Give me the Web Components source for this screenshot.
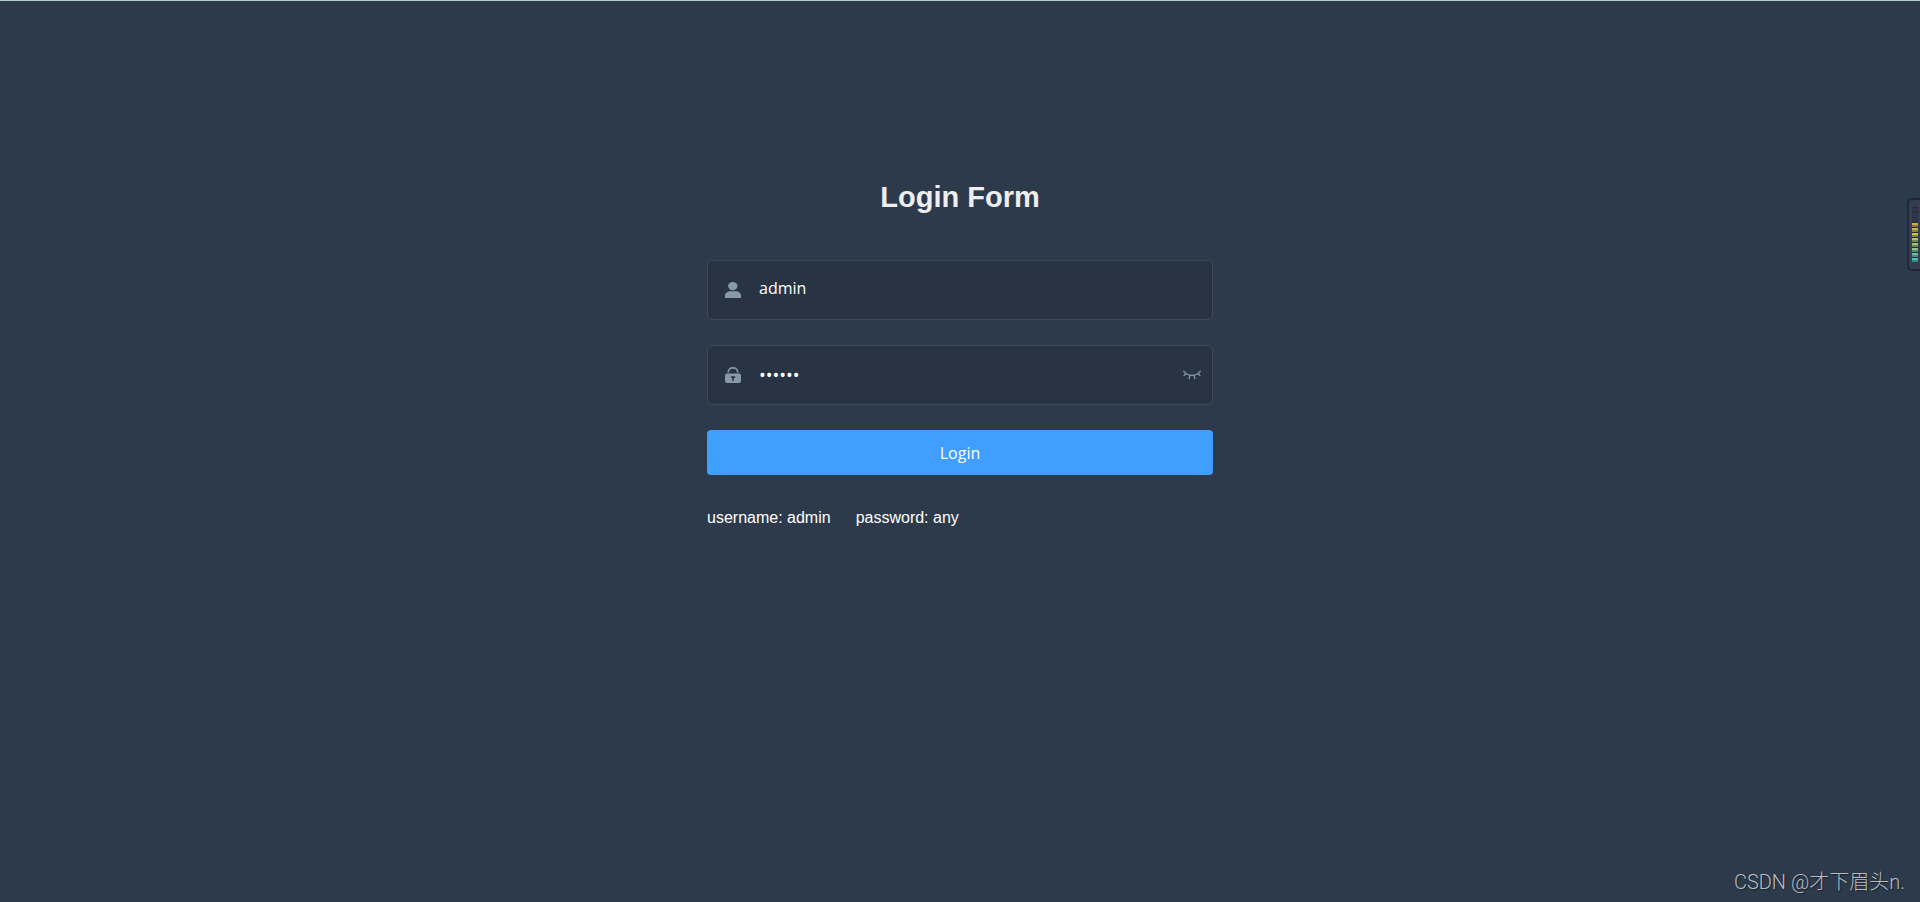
<!DOCTYPE html>
<html lang="en">
<head>
<meta charset="utf-8">
<meta name="viewport" content="width=device-width, initial-scale=1">
<title>Login</title>
<style>
  html, body {
    margin: 0;
    height: 100%;
    background: #2d3a4b;
    font-family: 'Liberation Sans', Arial, sans-serif;
  }
</style>
</head>
<body>
<login-page>
  <login-form></login-form>
  <level-meter slot="side"></level-meter>
  <page-mark slot="mark">CSDN @才下眉头n.</page-mark>
</login-page>

<script>
const pageTemplate = document.createElement('template');
pageTemplate.innerHTML = `
  <style>
  :host {
    display: flex;
    flex-direction: column;
    box-sizing: border-box;
    min-height: 100vh;
    border-top: 1px solid #b4d0d0;
    background: #2d3a4b;
  }
  main {
    display: flex;
    flex: 1;
    justify-content: center;
    padding: 177px 32px 0;
  }
  footer {
    display: flex;
    justify-content: flex-end;
    padding: 0 15px 5px;
  }
  </style>
  <main><slot></slot></main>
  <slot name="side"></slot>
  <footer><slot name="mark"></slot></footer>
`;

class LoginPage extends HTMLElement {
  constructor() {
    super();
    this.attachShadow({ mode: 'open' });
    this.shadowRoot.appendChild(pageTemplate.content.cloneNode(true));
  }
}

const formTemplate = document.createElement('template');
formTemplate.innerHTML = `
  <style>
  :host {
    display: block;
    width: 100%;
    max-width: 506px;
  }
  form {
    display: flex;
    flex-direction: column;
    gap: 25px;
  }
  h1 {
    margin: 0 0 18px;
    color: #eee;
    font-size: 29px;
    line-height: 39px;
    text-align: center;
  }
  .tips {
    display: flex;
    gap: 25px;
    padding-top: 6px;
    color: #fff;
    font-size: 16px;
    line-height: 24px;
  }
  </style>
  <form>
    <h1>Login Form</h1>
    <login-field name="username" label="Username" type="text" value="admin">
      <svg slot="icon" width="16" height="16" viewBox="0 0 16 16" fill="currentColor">
        <ellipse cx="7.8" cy="4.1" rx="4.7" ry="4.1"/>
        <path d="M0 16v-2.4C0 11 2.6 9.2 5.4 9.2h5.2c2.8 0 5.4 1.8 5.4 4.4V16z"/>
      </svg>
    </login-field>
    <login-field name="password" label="Password" type="password" value="111111">
      <svg slot="icon" width="16" height="16" viewBox="0 0 16 16" fill="currentColor">
        <path fill-rule="evenodd" d="M2 6.6h12a2 2 0 0 1 2 2V14a2 2 0 0 1-2 2H2a2 2 0 0 1-2-2V8.600a2 2 0 0 1 2-2zM6 9.200v1.700h1.300v3h1.500v-3h1.300V9.200z"/>
        <path d="M3.300 5.500V5.100a4.700 4.200 0 0 1 9.400 0v.4" fill="none" stroke="currentColor" stroke-width="1.800"/>
      </svg>
    </login-field>
    <login-button>Login</login-button>
    <div class="tips">
      <span>username: admin</span>
      <span>password: any</span>
    </div>
  </form>
`;

class LoginForm extends HTMLElement {
  constructor() {
    super();
    this.attachShadow({ mode: 'open' });
    this.shadowRoot.appendChild(formTemplate.content.cloneNode(true));
    this.shadowRoot
      .querySelector('form')
      .addEventListener('submit', (e) => e.preventDefault());
  }
}

const fieldTemplate = document.createElement('template');
fieldTemplate.innerHTML = `
  <style>
  :host {
    display: flex;
    align-items: center;
    box-sizing: border-box;
    height: 60px;
    padding: 0 11px 0 17px;
    border: 1px solid #3e4957;
    border-radius: 5px;
    background: #283443;
    color: #889aa4;
  }
  label {
    display: flex;
    flex: none;
  }
  input {
    flex: 1;
    min-width: 0;
    height: 52px;
    margin: 0 0 4px;
    padding: 0 18px;
    border: 0;
    outline: 0;
    background: transparent;
    color: #fff;
    font: 16px 'Open Sans', 'Noto Sans', sans-serif;
  }
  input[type='password'] {
    margin: 0;
    font-size: 18px;
  }
  button {
    display: flex;
    padding: 0;
    border: 0;
    background: none;
    color: inherit;
    cursor: pointer;
  }
  button[hidden] {
    display: none;
  }
  </style>
  <label for="field"><slot name="icon"></slot></label>
  <input id="field">
  <button type="button" aria-label="Show password" hidden>
    <svg width="18" height="10" viewBox="0 0 18 10" fill="none" stroke="currentColor" stroke-width="1.300">
      <path d="M.4.800C2.300 3.700 5.200 5.300 9 5.300S15.700 3.700 17.600.800M3.400 3.300.700 5.700M14.600 3.300l2.700 2.400M6.900 5.200 6.100 9M11.100 5.200l.8 3.800"/>
    </svg>
  </button>
`;

class LoginField extends HTMLElement {
  constructor() {
    super();
    this.attachShadow({ mode: 'open' });
    this.shadowRoot.appendChild(fieldTemplate.content.cloneNode(true));
  }

  connectedCallback() {
    const input = this.shadowRoot.querySelector('input');
    const eye = this.shadowRoot.querySelector('button');
    const type = this.getAttribute('type');

    input.type = type;
    input.name = this.getAttribute('name');
    input.value = this.getAttribute('value');
    input.setAttribute('aria-label', this.getAttribute('label'));

    if (type === 'password') {
      eye.hidden = false;
      eye.addEventListener('click', () => {
        input.type = input.type === 'password' ? 'text' : 'password';
      });
    }
  }
}

const buttonTemplate = document.createElement('template');
buttonTemplate.innerHTML = `
  <style>
  :host {
    display: block;
  }
  button {
    display: block;
    width: 100%;
    height: 45px;
    padding: 0;
    border: 0;
    border-radius: 4px;
    background: #409eff;
    color: #fff;
    font: 16px 'Open Sans', 'Noto Sans', sans-serif;
    cursor: pointer;
  }
  </style>
  <button type="submit"><slot></slot></button>
`;

class LoginButton extends HTMLElement {
  constructor() {
    super();
    this.attachShadow({ mode: 'open' });
    this.shadowRoot.appendChild(buttonTemplate.content.cloneNode(true));
  }
}

// floating meter docked to the right edge of the window
const meterTemplate = document.createElement('template');
meterTemplate.innerHTML = `
  <style>
  :host {
    position: absolute;
    top: 198px;
    right: 0;
    display: flex;
    flex-direction: column;
    box-sizing: border-box;
    width: 13px;
    padding: 7px 2px 7px 3px;
    border: 2px solid #20283a;
    border-right: 0;
    border-radius: 5px 0 0 5px;
    background: #363c54;
  }
  i {
    box-sizing: border-box;
    height: 5px;
    border-top: 1px solid #262c3c;
    border-bottom: 2px solid var(--edge, #2f3549);
    background: var(--level, #30374a);
  }
  </style>
`;

class LevelMeter extends HTMLElement {
  constructor() {
    super();
    this.attachShadow({ mode: 'open' });
    this.shadowRoot.appendChild(meterTemplate.content.cloneNode(true));

    const levels = [
      [], [], [],
      ['#d0aa4c', '#94743c'],
      ['#ccb548', '#8d7f3a'],
      ['#c4c44a', '#7f8540'],
      ['#b0c858', '#728845'],
      ['#9bc96a', '#668b55'],
      ['#80c886', '#578a66'],
      ['#62c4a2', '#468a78'],
      ['#42c4b4', '#358a84'],
    ];
    levels.forEach(([color, edge]) => {
      const bar = document.createElement('i');
      if (color) {
        bar.style.setProperty('--level', color);
        bar.style.setProperty('--edge', edge);
      }
      this.shadowRoot.appendChild(bar);
    });
  }
}

class PageMark extends HTMLElement {
  constructor() {
    super();
    this.attachShadow({ mode: 'open' });
    this.shadowRoot.innerHTML = `
      <style>
      :host {
        display: block;
        color: #b8bcc1;
        font: 300 20px/30px Roboto, 'Noto Sans CJK SC', sans-serif;
        text-shadow: 1px 1px 1px #1a222d;
      }
      </style>
      <slot></slot>
    `;
  }
}

window.customElements.define('login-page', LoginPage);
window.customElements.define('login-form', LoginForm);
window.customElements.define('login-field', LoginField);
window.customElements.define('login-button', LoginButton);
window.customElements.define('level-meter', LevelMeter);
window.customElements.define('page-mark', PageMark);
</script>
</body>
</html>
